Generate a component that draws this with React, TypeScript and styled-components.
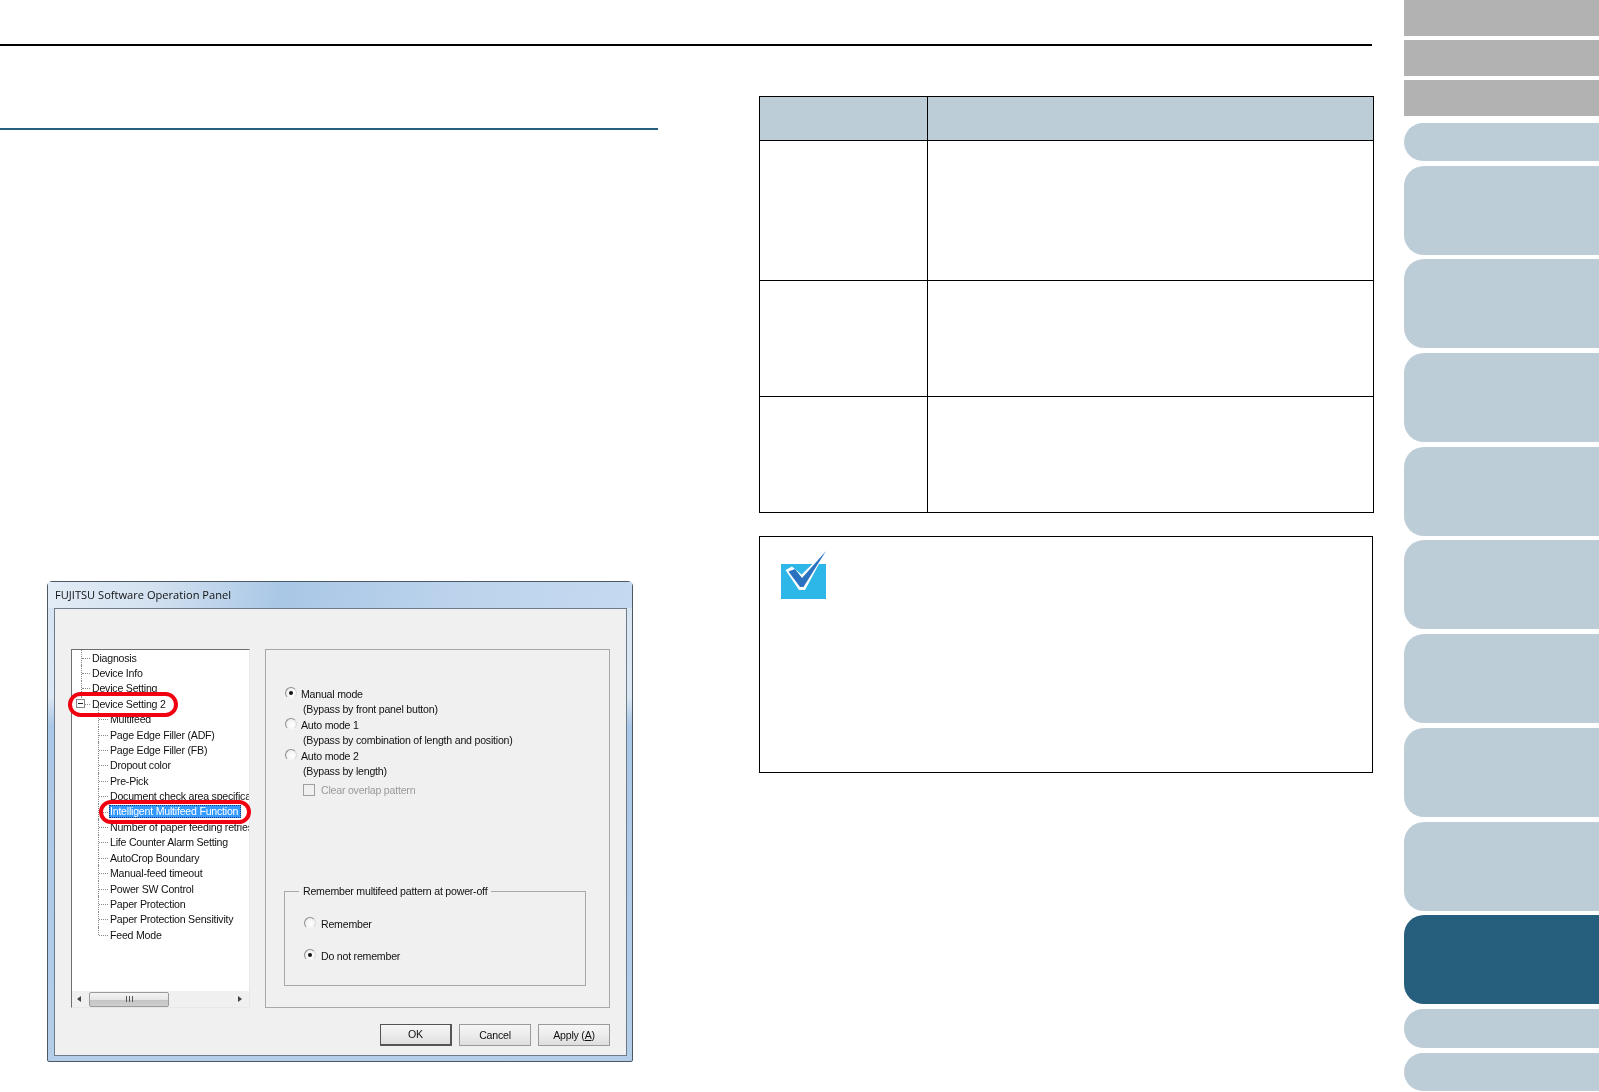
import React from "react";
import styled, { createGlobalStyle } from "styled-components";

const Global = createGlobalStyle`
  html, body { margin: 0; padding: 0; background: #fff; }
  body { font-family: "Liberation Sans", Arial, sans-serif; }
  #root { width: 1599px; height: 1092px; overflow: hidden; }
`;

const Page = styled.div`
  display: flex;
  width: 1599px;
  height: 1092px;
  overflow: hidden;
  background: #fff;
`;

const Main = styled.main`
  width: 1404px;
  display: flex;
  flex-direction: column;
`;

const TopRule = styled.div`
  box-sizing: border-box;
  height: 46px;
  width: 1372px;
  border-bottom: 2px solid #000;
`;

const Columns = styled.div`
  display: flex;
  align-items: flex-start;
`;

const LeftColumn = styled.section`
  width: 658px;
  display: flex;
  flex-direction: column;
`;

const SectionRule = styled.div`
  margin-top: 82px;
  height: 2px;
  background: #265e7d;
`;

const RightColumn = styled.section`
  margin-left: 101px;
  width: 615px;
  padding-top: 50px;
`;

const SpecTable = styled.table`
  width: 615px;
  height: 416px;
  border-collapse: collapse;
  table-layout: fixed;
  td, th { border: 1px solid #000; padding: 0; }
  th { background: #bdcdd8; }
`;

const KeyCol = styled.col`
  width: 167.5px;
`;

const Row = styled.tr<{ $h: number }>`
  height: ${(p) => p.$h}px;
`;

const NoteBox = styled.aside`
  box-sizing: border-box;
  margin-top: 23px;
  width: 614px;
  height: 237px;
  border: 1px solid #000;
  padding: 14px 0 0 21px;
`;

const NoteIcon = styled.svg`
  display: block;
  width: 46px;
  height: 49px;
`;

/* ---------- Dialog screenshot ---------- */

const DialogWindow = styled.div`
  box-sizing: border-box;
  margin: 451px 0 0 47px;
  width: 586px;
  height: 481px;
  border: 1px solid #4c5a67;
  border-radius: 5px 5px 2px 2px;
  padding: 0 5px 5px 6px;
  display: flex;
  flex-direction: column;
  filter: blur(0.3px);
  background: linear-gradient(
    to bottom,
    #d7e4f2 0,
    #dbe7f3 24%,
    #a9c7e6 30%,
    #b4cee9 100%
  );
`;

const TitleBar = styled.div`
  height: 26px;
  flex: none;
  margin: 0 -5px 0 -6px;
  padding: 0 0 2px 7px;
  box-sizing: border-box;
  display: flex;
  align-items: center;
  font-family: "Open Sans", "Liberation Sans", sans-serif;
  font-size: 11.1px;
  color: #111;
  background: linear-gradient(
    100deg,
    #e3ecf6 0,
    #d3e1f0 18%,
    #a9c7e6 40%,
    #bcd3ec 70%,
    #c5daf0 100%
  );
`;

const DialogBody = styled.div`
  flex: 1;
  box-sizing: border-box;
  border: 1px solid #6b7b8a;
  background: #f0f0f0;
  padding: 40px 16px 0 16px;
  display: flex;
  flex-direction: column;
  font-size: 10.6px;
  letter-spacing: -0.22px;
  color: #111;
`;

const Panels = styled.div`
  display: flex;
  gap: 15px;
  height: 359px;
`;

const TreePanel = styled.div`
  position: relative;
  box-sizing: border-box;
  width: 179px;
  height: 100%;
  border: 1px solid #6e6e6e;
  border-right-color: #e8e8e8;
  border-bottom-color: #e8e8e8;
  background: #fff;
`;

const TreeInner = styled.div`
  height: 100%;
  display: flex;
  flex-direction: column;
  overflow: hidden;
`;

const TreeList = styled.div`
  flex: 1;
`;

const TreeRow = styled.div<{ $level: number; $last?: boolean; $first?: boolean }>`
  position: relative;
  height: 15.4px;
  display: flex;
  align-items: center;
  white-space: nowrap;
  padding-left: ${(p) => (p.$level ? 38 : 20)}px;
  &::before {
    content: "";
    position: absolute;
    left: ${(p) => (p.$level ? 26 : 9)}px;
    top: ${(p) => (p.$first ? -5 : 0)}px;
    bottom: ${(p) => (p.$last ? "50%" : 0)};
    border-left: 1px dotted #888;
  }
  &::after {
    content: "";
    position: absolute;
    left: ${(p) => (p.$level ? 27 : 10)}px;
    width: ${(p) => (p.$level ? 9 : 8)}px;
    top: 50%;
    border-top: 1px dotted #888;
  }
`;

const TreeLabel = styled.span<{ $selected?: boolean }>`
  ${(p) =>
    p.$selected
      ? `
    position: relative;
    z-index: 1;
    margin-left: -1px;
    padding: 0 3px 0 1px;
    line-height: 13px;
    color: #fff;
    background: #3399ff;
    outline: 1px dotted #123a6a;
    outline-offset: -1px;
  `
      : ""}
`;

const Expander = styled.span`
  position: absolute;
  z-index: 1;
  left: 4px;
  top: 3px;
  box-sizing: border-box;
  width: 9px;
  height: 9px;
  border: 1px solid #888;
  background: #fff;
  &::after {
    content: "";
    position: absolute;
    left: 1px;
    right: 1px;
    top: 3px;
    height: 1px;
    background: #222;
  }
`;

const Oval = styled.div<{ $l: number; $t: number; $w: number; $h: number }>`
  position: absolute;
  z-index: 2;
  box-sizing: border-box;
  left: ${(p) => p.$l}px;
  top: ${(p) => p.$t}px;
  width: ${(p) => p.$w}px;
  height: ${(p) => p.$h}px;
  border: 4px solid #f00010;
  border-radius: 13px;
`;

const ScrollBar = styled.div`
  flex: none;
  height: 16px;
  display: flex;
  align-items: center;
  background: #f0f0f0;
`;

const ScrollArrow = styled.span<{ $right?: boolean }>`
  flex: none;
  width: 0;
  height: 0;
  border-top: 3.5px solid transparent;
  border-bottom: 3.5px solid transparent;
  ${(p) =>
    p.$right
      ? "border-left: 4px solid #444; margin-left: 69px;"
      : "border-right: 4px solid #444; margin-left: 5px;"}
`;

const ScrollThumb = styled.span`
  flex: none;
  box-sizing: border-box;
  position: relative;
  margin-left: 8px;
  width: 80px;
  height: 15px;
  border: 1px solid #9a9a9a;
  border-radius: 2px;
  background: linear-gradient(to bottom, #f4f4f4 0, #e6e6e6 50%, #c4c4c4 55%, #cfcfcf 100%);
  display: flex;
  justify-content: center;
  align-items: center;
  &::after {
    content: "";
    width: 7px;
    height: 6px;
    background: repeating-linear-gradient(to right, #555 0 1px, transparent 1px 3px);
  }
`;

const OptionsPanel = styled.div`
  box-sizing: border-box;
  width: 346px;
  height: 100%;
  border: 1px solid #a8a8a8;
  padding: 36px 0 21px 19px;
  display: flex;
  flex-direction: column;
`;

const RadioRow = styled.label`
  height: 16px;
  display: flex;
  align-items: center;
  gap: 4px;
`;

const RadioMark = styled.span<{ $on?: boolean }>`
  flex: none;
  position: relative;
  top: -1px;
  box-sizing: border-box;
  width: 12px;
  height: 12px;
  border-radius: 50%;
  border: 1px solid;
  border-color: #8f8f8f #d8d8d8 #f4f4f4 #8f8f8f;
  background: radial-gradient(circle at 60% 60%, #fff 0, #f2f2f2 60%, #ccc 100%);
  display: flex;
  align-items: center;
  justify-content: center;
  &::after {
    content: "";
    width: 4px;
    height: 4px;
    border-radius: 50%;
    background: ${(p) => (p.$on ? "#111" : "transparent")};
  }
`;

const SubText = styled.div`
  height: 15px;
  line-height: 15px;
  padding-left: 18px;
  white-space: nowrap;
`;

const CheckRow = styled.label`
  margin: 3px 0 0 18px;
  height: 16px;
  display: flex;
  align-items: center;
  gap: 6px;
  color: #9a9a9a;
`;

const CheckMark = styled.span`
  flex: none;
  box-sizing: border-box;
  width: 12px;
  height: 12px;
  border: 1px solid #a0a0a0;
  background: #f0f0f0;
`;

const Group = styled.fieldset`
  box-sizing: border-box;
  margin: auto 0 0 -1px;
  width: 302px;
  height: 102px;
  border: 1px solid #a8a8a8;
  padding: 17px 0 0 0;
  min-width: 0;
  display: block;
`;

const GroupLegend = styled.legend`
  margin-left: 14px;
  padding: 0 4px;
  font-size: 10.6px;
  line-height: 15px;
  white-space: nowrap;
`;

const GroupRow = styled(RadioRow)`
  gap: 5px;
  margin: 0 0 16px 19px;
`;

const Footer = styled.div`
  margin-top: 16px;
  display: flex;
  justify-content: flex-end;
  gap: 7px;
`;

const DialogButton = styled.button<{ $def?: boolean }>`
  box-sizing: border-box;
  width: 72px;
  height: 22px;
  padding: 0 0 1px;
  font: inherit;
  letter-spacing: inherit;
  color: #111;
  background: linear-gradient(to bottom, #f6f6f6 0, #ececec 50%, #dedede 100%);
  border: 1px solid ${(p) => (p.$def ? "#555" : "#9a9a9a")};
  border-right-width: ${(p) => (p.$def ? 2 : 1)}px;
  border-bottom-width: ${(p) => (p.$def ? 2 : 1)}px;
  u { text-decoration: underline; }
`;

/* ---------- Sidebar ---------- */

const Sidebar = styled.nav`
  width: 195px;
  height: 1092px;
  display: flex;
  flex-direction: column;
`;

const GrayTab = styled.div`
  flex: none;
  height: 36px;
  margin-bottom: 4px;
  background: #b2b2b2;
`;

const ShortTab = styled.div<{ $top: number; $h: number }>`
  flex: none;
  height: ${(p) => p.$h}px;
  margin-top: ${(p) => p.$top}px;
  border-radius: 19px 0 0 19px;
  background: #bdcdd8;
`;

const TallTab = styled.div<{ $active?: boolean }>`
  flex: none;
  height: 89px;
  margin-top: 4.7px;
  border-radius: 20px 0 0 20px;
  background: ${(p) => (p.$active ? "#265e7d" : "#bdcdd8")};
`;

const rootNodes = ["Diagnosis", "Device Info", "Device Setting"];
const childNodes = [
  "Multifeed",
  "Page Edge Filler (ADF)",
  "Page Edge Filler (FB)",
  "Dropout color",
  "Pre-Pick",
  "Document check area specification",
  "Intelligent Multifeed Function",
  "Number of paper feeding retries",
  "Life Counter Alarm Setting",
  "AutoCrop Boundary",
  "Manual-feed timeout",
  "Power SW Control",
  "Paper Protection",
  "Paper Protection Sensitivity",
  "Feed Mode",
];

const tallTabs = [false, false, false, false, false, false, false, false, true];

export default function App() {
  return (
    <Page>
      <Global />
      <Main>
        <TopRule />
        <Columns>
          <LeftColumn>
            <SectionRule />
            <DialogWindow>
              <TitleBar>FUJITSU Software Operation Panel</TitleBar>
              <DialogBody>
                <Panels>
                  <TreePanel>
                    <TreeInner>
                      <TreeList>
                        {rootNodes.map((n) => (
                          <TreeRow key={n} $level={0}>
                            <TreeLabel>{n}</TreeLabel>
                          </TreeRow>
                        ))}
                        <TreeRow $level={0} $last>
                          <Expander />
                          <TreeLabel>Device Setting 2</TreeLabel>
                        </TreeRow>
                        {childNodes.map((n, i) => (
                          <TreeRow
                            key={n}
                            $level={1}
                            $first={i === 0}
                            $last={i === childNodes.length - 1}
                          >
                            <TreeLabel $selected={n.startsWith("Intelligent")}>{n}</TreeLabel>
                          </TreeRow>
                        ))}
                      </TreeList>
                      <ScrollBar>
                        <ScrollArrow />
                        <ScrollThumb />
                        <ScrollArrow $right />
                      </ScrollBar>
                    </TreeInner>
                    <Oval $l={-4} $t={42} $w={110} $h={25} />
                    <Oval $l={27} $t={150} $w={152} $h={24} />
                  </TreePanel>
                  <OptionsPanel>
                    <RadioRow>
                      <RadioMark $on />
                      Manual mode
                    </RadioRow>
                    <SubText>(Bypass by front panel button)</SubText>
                    <RadioRow>
                      <RadioMark />
                      Auto mode 1
                    </RadioRow>
                    <SubText>(Bypass by combination of length and position)</SubText>
                    <RadioRow>
                      <RadioMark />
                      Auto mode 2
                    </RadioRow>
                    <SubText>(Bypass by length)</SubText>
                    <CheckRow>
                      <CheckMark />
                      Clear overlap pattern
                    </CheckRow>
                    <Group>
                      <GroupLegend>Remember multifeed pattern at power-off</GroupLegend>
                      <GroupRow>
                        <RadioMark />
                        Remember
                      </GroupRow>
                      <GroupRow>
                        <RadioMark $on />
                        Do not remember
                      </GroupRow>
                    </Group>
                  </OptionsPanel>
                </Panels>
                <Footer>
                  <DialogButton $def>OK</DialogButton>
                  <DialogButton>Cancel</DialogButton>
                  <DialogButton>
                    Apply (<u>A</u>)
                  </DialogButton>
                </Footer>
              </DialogBody>
            </DialogWindow>
          </LeftColumn>
          <RightColumn>
            <SpecTable>
              <colgroup>
                <KeyCol />
                <col />
              </colgroup>
              <tbody>
                <Row $h={44}>
                  <th />
                  <th />
                </Row>
                <Row $h={140}>
                  <td />
                  <td />
                </Row>
                <Row $h={116}>
                  <td />
                  <td />
                </Row>
                <Row $h={116}>
                  <td />
                  <td />
                </Row>
              </tbody>
            </SpecTable>
            <NoteBox>
              <NoteIcon viewBox="0 0 46 49">
                <rect x="0" y="13" width="45" height="35" fill="#2db6e8" />
                <path d="M4.5 19 L11 15.5 L20.5 23.5 L45 0 L24 39 L18 39 Z" fill="#fff" />
                <path d="M7.5 20.5 L14 18 L21 27 L45 0 L22.5 36 L19 36 Z" fill="#2a72c0" />
              </NoteIcon>
            </NoteBox>
          </RightColumn>
        </Columns>
      </Main>
      <Sidebar>
        <GrayTab />
        <GrayTab />
        <GrayTab />
        <ShortTab $top={3} $h={38} />
        {tallTabs.map((active, i) => (
          <TallTab key={i} $active={active} />
        ))}
        <ShortTab $top={4.7} $h={39} />
        <ShortTab $top={5} $h={38.5} />
      </Sidebar>
    </Page>
  );
}
